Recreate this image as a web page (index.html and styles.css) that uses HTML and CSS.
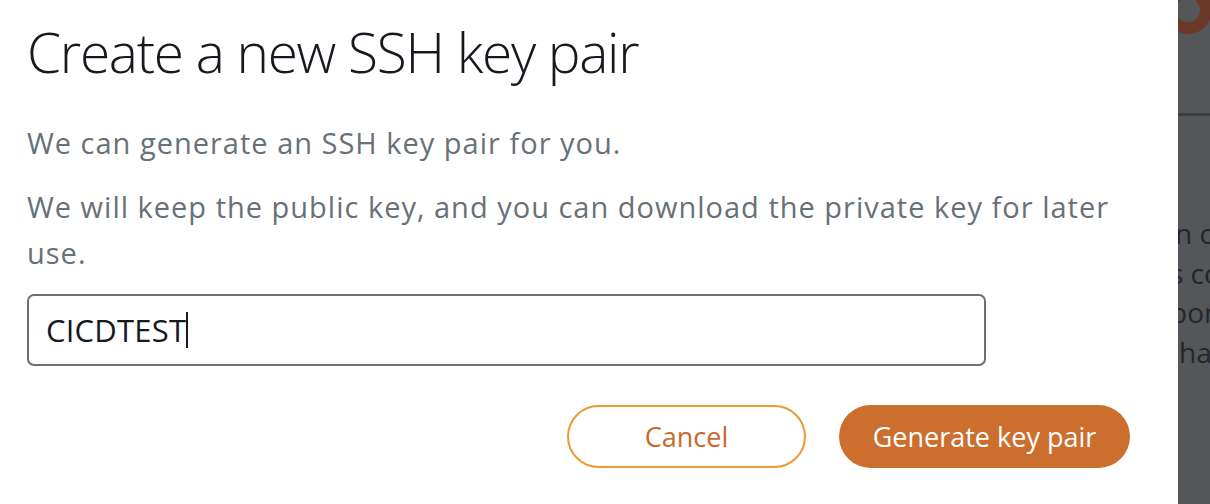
FILE: index.html
```html
<!DOCTYPE html>
<html>
<head>
<meta charset="utf-8">
<link rel="stylesheet" href="styles.css">
</head>
<body>
<div class="page">
  <div class="dialog">
    <h1 class="title">Create a new SSH key pair</h1>
    <p class="text">We can generate an SSH key pair for you.</p>
    <p class="text text-second">We will keep the public key, and you can download the private key for later use.</p>
    <div class="field">
      <span class="value">CICDTEST</span><span class="caret"></span>
    </div>
    <div class="actions">
      <button class="btn btn-cancel">Cancel</button>
      <button class="btn btn-primary">Generate key pair</button>
    </div>
  </div>
  <div class="backdrop">
    <div class="ring"></div>
    <div class="rule"></div>
    <div class="behind">
      <div class="line l1">n c</div>
      <div class="line l2">s co</div>
      <div class="line l3">pon</div>
      <div class="line l4">ha</div>
    </div>
  </div>
</div>
</body>
</html>
```

FILE: styles.css
```css
html, body {
  margin: 0;
  padding: 0;
  width: 1210px;
  height: 504px;
  overflow: hidden;
  font-family: "Open Sans", "Noto Sans", sans-serif;
}
.page {
  display: flex;
  height: 504px;
}
.dialog {
  width: 1178px;
  flex: none;
  background: #ffffff;
  box-sizing: border-box;
  padding: 20px 0 0 27px;
}
.title {
  margin: 0;
  font-weight: 300;
  font-size: 55px;
  line-height: 64px;
  color: #16191f;
  letter-spacing: -1.3px;
}
.text {
  margin: 36px 0 0 0;
  width: 1125px;
  font-size: 29px;
  line-height: 46px;
  letter-spacing: 1px;
  color: #687078;
}
.text-second {
  margin-top: 18px;
}
.field {
  margin-top: 18px;
  width: 959px;
  height: 72px;
  box-sizing: border-box;
  border: 2px solid #687078;
  border-radius: 7px;
  display: flex;
  align-items: center;
  padding-left: 17px;
  font-size: 31px;
  letter-spacing: 0.2px;
  color: #16191f;
}
.caret {
  display: inline-block;
  width: 2px;
  height: 36px;
  background: #16191f;
  margin-left: 0;
}
.actions {
  margin-top: 39px;
  width: 1103px;
  display: flex;
  justify-content: flex-end;
  gap: 33px;
}
.btn {
  height: 63px;
  border-radius: 32px;
  font-family: "Open Sans", "Noto Sans", sans-serif;
  font-size: 27px;
  box-sizing: border-box;
  cursor: pointer;
  padding: 0;
}
.btn-cancel {
  width: 239px;
  background: #ffffff;
  border: 2px solid #ec9a33;
  color: #c9692b;
}
.btn-primary {
  width: 291px;
  background: #cc6f2e;
  border: none;
  color: #ffffff;
}
.backdrop {
  flex: 1;
  background: #545659;
  position: relative;
  overflow: hidden;
}
.ring {
  position: absolute;
  left: -14px;
  top: -14px;
  width: 24px;
  height: 24px;
  border: 12px solid #6b3a26;
  border-radius: 50%;
}
.rule {
  position: absolute;
  left: 0;
  right: 0;
  top: 113px;
  height: 3px;
  background: #3f4043;
}
.behind {
  padding-top: 214px;
  font-size: 28px;
  color: #25272a;
  white-space: nowrap;
}
.line {
  height: 39.5px;
  line-height: 39.5px;
}
.l1 { margin-left: -3px; }
.l2 { margin-left: -8px; }
.l3 { margin-left: -8px; }
.l4 { margin-left: 1px; }
```
